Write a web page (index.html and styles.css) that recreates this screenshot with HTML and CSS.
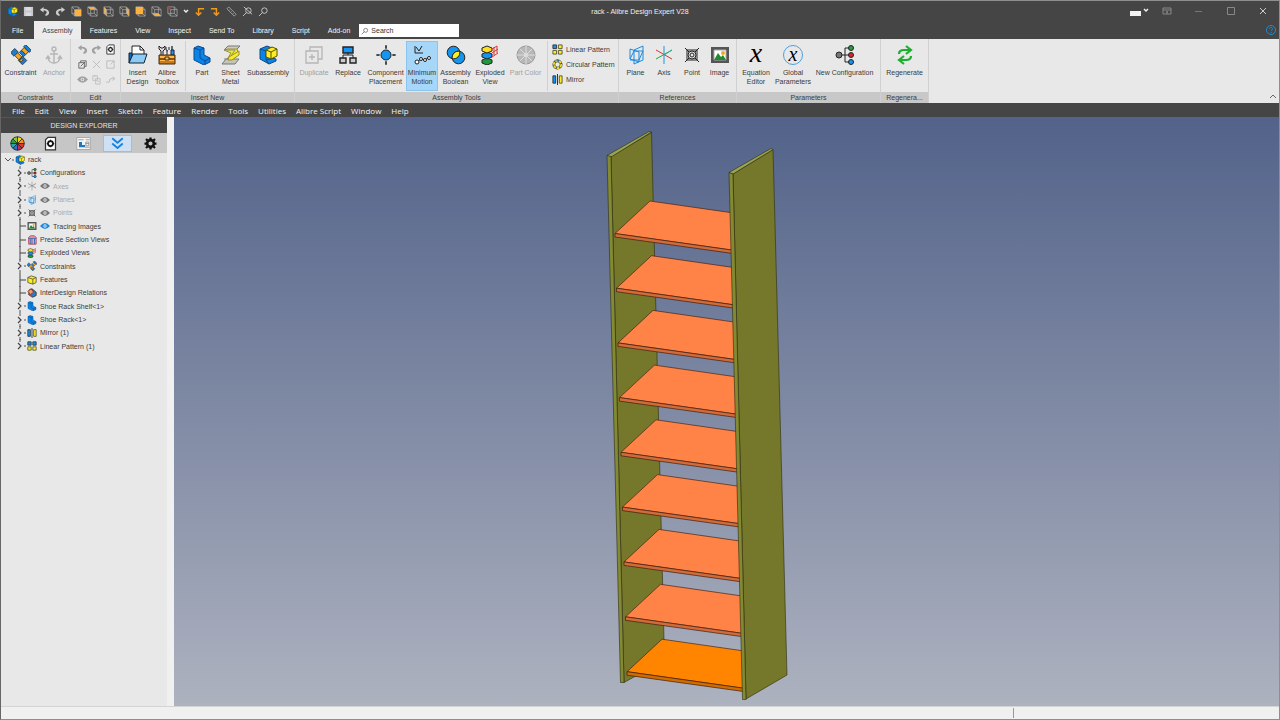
FILE: index.html
```
<!DOCTYPE html>
<html lang="en">
    <head>
        <meta charset="UTF-8" />
        <meta name="viewport" content="width=device-width, initial-scale=1.0" />
        <title>rack - Alibre Design Expert V28</title>
        <link rel="stylesheet" href="styles.css">
    </head>
    <body>
        <!-- Icon sprite -->
        <svg class="sprite" aria-hidden="true">
            <symbol id="i-asm" viewBox="0 0 20 20">
                <path d="M2 4l7-3 5 2v10l4 1v2l-7 3-9-5z" fill="#0b84e8" stroke="#124a80" />
                <path d="M2 4l6 2v9l3 4M8 15l8-2" fill="none" stroke="#124a80" />
                <path d="M8 5l6-3 5 2v7l-6 3-5-2z" fill="#ffee22" stroke="#554d10" />
                <path d="M8 5l5 2 6-3M13 7v7" fill="none" stroke="#554d10" />
            </symbol>
            <symbol id="i-part" viewBox="0 0 20 20">
                <path d="M2 3l4-2 6 2v7l6 3v4l-6 3-10-5z" fill="#0b84e8" stroke="#0a4a90" />
                <path d="M2 3l6 2 4-2M8 5v8l5 3 5-3M13 16v3" fill="none" stroke="#0a4a90" />
            </symbol>
            <symbol id="i-constraint" viewBox="0 0 20 20">
                <g transform="rotate(45 8 12)" stroke="#333" stroke-width="0.8">
                    <path d="M-1 9h5v6h-5z" fill="#1a7fd4" />
                    <path d="M4 10h6v4h-6z" fill="#f5a623" />
                    <path d="M10 9h6v6h-6z" fill="#1a7fd4" />
                    <path d="M11 11h2v3h-2z" fill="#f5a623" />
                </g>
                <g transform="rotate(-45 14 6)" stroke="#333" stroke-width="0.8">
                    <path d="M9 3h3v6h-3z" fill="#1a7fd4" />
                    <path d="M12 3h4v6h-4z" fill="#f5a623" />
                    <path d="M16 2h3v8h-3z" fill="#1a7fd4" />
                </g>
            </symbol>
            <symbol id="i-anchor" viewBox="0 0 20 20">
                <g fill="none" stroke="#b5b5b5" stroke-width="1.4">
                    <circle cx="10" cy="4" r="2" />
                    <path d="M10 6v12M6 9h8M4 12c0 4 3 6 6 6s6-2 6-6M2 14l2-3 2 3M14 14l2-3 2 3" />
                </g>
            </symbol>
            <symbol id="i-undo" viewBox="0 0 12 12">
                <path d="M1 4l4-3v2c4 0 6 2 6 4s-1 3-4 4v-2c3-2 1-4-2-4v2z" fill="currentColor" />
            </symbol>
            <symbol id="i-redo" viewBox="0 0 12 12">
                <path d="M11 4l-4-3v2c-4 0-6 2-6 4s1 3 4 4v-2c-3-2-1-4 2-4v2z" fill="currentColor" />
            </symbol>
            <symbol id="i-docgear" viewBox="0 0 12 12">
                <path d="M4 1h6v10h-8v-8z" fill="#fff" stroke="#333" />
                <circle cx="6" cy="6" r="2" fill="none" stroke="#111" stroke-width="1.4" />
                <path d="M6 3v1M6 8v1M3 6h1M8 6h1" stroke="#111" />
            </symbol>
            <symbol id="i-copy" viewBox="0 0 12 12">
                <path d="M2 4h6v6h-6zM4 4v-2h6v6h-2M4 8l5-5" fill="none" stroke="#666" />
            </symbol>
            <symbol id="i-x" viewBox="0 0 12 12">
                <path d="M2 2l8 8M10 2l-8 8" fill="none" stroke="#bbb" />
            </symbol>
            <symbol id="i-edit" viewBox="0 0 12 12">
                <path d="M7 2h-5v8h8v-5M6 6l4-4M7 2h3v3" fill="none" stroke="#bbb" />
            </symbol>
            <symbol id="i-eye" viewBox="0 0 12 12">
                <path d="M0 6q6-7 12 0q-6 7-12 0" fill="currentColor" />
                <circle cx="6" cy="6" r="2" fill="#e8e8e8" />
                <circle cx="6" cy="6" r="1" fill="currentColor" />
            </symbol>
            <symbol id="i-paste" viewBox="0 0 12 12">
                <path d="M2 2h5v5h-5zM5 5h5v6h-5zM4 1v2M7 8h2" fill="none" stroke="#c0c0c0" />
            </symbol>
            <symbol id="i-route" viewBox="0 0 12 12">
                <path d="M1 9h3l2-4h4M8 3l3 2-3 2M5 9v-3" fill="none" stroke="#c0c0c0" />
            </symbol>
            <symbol id="i-insert" viewBox="0 0 20 20">
                <path d="M4 13v-12h8l4 4v9" fill="#fff" stroke="#222" />
                <path d="M12 1v4h4" fill="none" stroke="#222" />
                <path d="M1 18v-10h3v4" fill="#0b6fc0" stroke="#123" />
                <path d="M5 9h14l-3 9h-15z" fill="#8ccbf5" stroke="#123" />
            </symbol>
            <symbol id="i-toolbox" viewBox="0 0 20 20">
                <path d="M4 10v-4l-2-2v-3l2 2h2l2-2v3l-2 2v4" fill="#ddd" stroke="#222" />
                <path d="M10 10v-4M9 2v3l2 1M12 2v3" fill="none" stroke="#222" />
                <path d="M15 1v4" stroke="#333" stroke-width="1.4" />
                <path d="M14 5h3v5h-3z" fill="#2694e8" stroke="#124" />
                <path d="M2 10h16v9h-16z" fill="#c87a1c" stroke="#4a2a08" />
                <path d="M3 11h14v2h-14zM3 15h14v1h-14z" fill="#ffb94e" />
                <path d="M2 14h16" stroke="#4a2a08" />
                <path d="M8 12h4v3h-4z" fill="#eec070" stroke="#4a2a08" />
            </symbol>
            <symbol id="i-sheet" viewBox="0 0 20 20">
                <path d="M7 1h12l-4 4h-12z" fill="#ccccc4" stroke="#777" />
                <path d="M3 5l4-1h9l1 3-8 9h-4l5-8z" fill="#f4ea28" stroke="#99922a" />
                <path d="M3 5h11l-6 9h-5" fill="none" stroke="#888" />
                <path d="M5 14h13l-4 5h-13z" fill="#c4c4ba" stroke="#777" />
                <path d="M8 12l10-6v4l-7 5h-4z" fill="#f4ea28" stroke="#99922a" />
            </symbol>
            <symbol id="i-dup" viewBox="0 0 20 20">
                <path d="M2 6h12v12h-12zM6 6v-4h12v12h-4M8 9v6M5 12h6" fill="none" stroke="#b5b5b5" stroke-width="1.3" />
            </symbol>
            <symbol id="i-replace" viewBox="0 0 20 20">
                <path d="M5 2h10v6h-10z" fill="#1594f0" stroke="#222" stroke-width="1.4" />
                <path d="M5 13v-3h10v3M10 8v2" fill="none" stroke="#222" />
                <path d="M2 13h6v5h-6zM12 13h6v5h-6z" fill="#ccc" stroke="#222" stroke-width="1.4" />
            </symbol>
            <symbol id="i-place" viewBox="0 0 20 20">
                <circle cx="10" cy="10" r="5" fill="#1594f0" stroke="#222" />
                <path d="M10 0v4M10 16v4M0 10h4M16 10h4M9 2h2M9 18h2M2 9v2M18 9v2" stroke="#222" stroke-width="1.2" />
            </symbol>
            <symbol id="i-motion" viewBox="0 0 20 20">
                <path d="M3 1v7h8M4 2l3 4 3-5" fill="none" stroke="#222" />
                <path d="M5 17l4-3 4 1 4-3" fill="none" stroke="#222" />
                <circle cx="5" cy="17" r="2" fill="#fff" stroke="#222" />
                <circle cx="9" cy="14" r="1.5" fill="#fff" stroke="#222" />
                <circle cx="13" cy="15" r="1.5" fill="#fff" stroke="#222" />
                <circle cx="17" cy="13" r="1.5" fill="#fff" stroke="#222" />
            </symbol>
            <symbol id="i-boolean" viewBox="0 0 20 20">
                <circle cx="7.500" cy="7.500" r="6.300" fill="#1594f0" stroke="#222" />
                <circle cx="12.500" cy="12.500" r="6.300" fill="#1594f0" stroke="#222" />
                <path d="M6.300 13.700a6.300 6.300 0 0 1 7.400-7.400a6.300 6.300 0 0 1-7.400 7.400" fill="#ffee22" stroke="#222" />
            </symbol>
            <symbol id="i-exploded" viewBox="0 0 20 20">
                <path d="M2 15l5-2 5 2v3l-5 2-5-2z" fill="#1f9a3a" stroke="#222" />
                <path d="M2 9l5-2 5 2v3l-5 2-5-2z" fill="#1594f0" stroke="#222" />
                <path d="M2 3l5-2 5 2v3l-5 2-5-2z" fill="#ffdd22" stroke="#222" />
                <path d="M12 4l5-3M12 8l6-4M12 12l6-4M14 2v8M17 1v7" fill="none" stroke="#d33" />
            </symbol>
            <symbol id="i-wheelgray" viewBox="0 0 20 20">
                <circle cx="10" cy="10" r="9" fill="#b8b8b8" stroke="#999" />
                <path d="M10 1v18M1 10h18M4 4l12 12M16 4l-12 12" stroke="#ddd" />
                <circle cx="10" cy="10" r="2" fill="#ddd" />
            </symbol>
            <symbol id="i-linear" viewBox="0 0 12 12">
                <path d="M1 1h4v4h-4z" fill="#1594f0" stroke="#333" />
                <path d="M7 1h4v4h-4zM1 7h4v4h-4zM7 7h4v4h-4z" fill="#ffee22" stroke="#553" />
            </symbol>
            <symbol id="i-linearpart" viewBox="0 0 12 12">
                <path d="M1 1h4v4h-4zM7 1h4v4h-4z" fill="#1594f0" stroke="#333" />
                <path d="M1 7h4v4h-4zM7 7h4v4h-4z" fill="#ffee22" stroke="#553" />
            </symbol>
            <symbol id="i-circular" viewBox="0 0 12 12">
                <circle cx="6" cy="6" r="4" fill="none" stroke="#444" stroke-width="3" />
                <circle cx="6" cy="6" r="4" fill="none" stroke="#f2e022" stroke-width="2" stroke-dasharray="3 1" />
                <path d="M5 0h2v3h-2z" fill="#1594f0" />
            </symbol>
            <symbol id="i-mirror" viewBox="0 0 12 12">
                <path d="M1 2h3v8h-3z" fill="#1594f0" stroke="#234" />
                <path d="M8 2h3v8h-3z" fill="#ffee22" stroke="#553" />
                <path d="M6 0v12" stroke="#222" />
            </symbol>
            <symbol id="i-plane" viewBox="0 0 20 20">
                <path d="M8 5l9-4v14l-9 4zM4 4l9 3v10l-9-3zM4 14l4-8h9l-4 9h-9" fill="none" stroke="#1a8ae0" />
            </symbol>
            <symbol id="i-axis" viewBox="0 0 20 20">
                <path d="M10 1v18" stroke="#2090e0" />
                <path d="M2 5l16 9" stroke="#d33" />
                <path d="M18 5l-16 9" stroke="#2a4" />
                <path d="M10 10l8-5" stroke="#2aa" />
            </symbol>
            <symbol id="i-point" viewBox="0 0 20 20">
                <path d="M5 5h10v10h-10zM3 3l14 14M17 3l-14 14" fill="none" stroke="#222" />
                <circle cx="10" cy="10" r="4" fill="#e8e8e8" stroke="#222" />
                <circle cx="10" cy="10" r="2" fill="none" stroke="#222" />
            </symbol>
            <symbol id="i-image" viewBox="0 0 20 20">
                <path d="M1 2h18v16h-18z" fill="#555" />
                <path d="M4 5h12v10h-12z" fill="#fff" stroke="#aaa" />
                <circle cx="13" cy="8" r="2" fill="#f6a821" />
                <path d="M4 15l4-7 3 4 2-2 3 5z" fill="#218a30" />
            </symbol>
            <symbol id="i-newconf" viewBox="0 0 20 20">
                <path d="M5 10h12M10 3v14M10 3h6M10 17h6" fill="none" stroke="#222" />
                <circle cx="4" cy="10" r="3" fill="#777" stroke="#222" />
                <circle cx="16" cy="3" r="2.500" fill="#1fa03a" stroke="#222" />
                <circle cx="16" cy="10" r="2.500" fill="#d8262c" stroke="#222" />
                <circle cx="16" cy="17" r="2.500" fill="#1594f0" stroke="#222" />
            </symbol>
            <symbol id="i-regen" viewBox="0 0 20 20">
                <g fill="none" stroke="#1cae2c" stroke-width="2.2">
                    <path d="M4 9c0-3 2-4 5-4h6M11 1l5 4-5 4" />
                    <path d="M16 11c0 3-2 4-5 4h-6M9 11l-5 4 5 4" />
                </g>
            </symbol>
            <symbol id="i-wheel" viewBox="0 0 20 20">
                <circle cx="10" cy="10" r="9" fill="#222" />
                <path d="M10 10V1a9 9 0 0 1 6.400 2.600z" fill="#f6d11c" />
                <path d="M10 10l6.400-6.400A9 9 0 0 1 19 10z" fill="#f7931e" />
                <path d="M10 10h9a9 9 0 0 1-2.600 6.400z" fill="#e8342a" />
                <path d="M10 10l6.400 6.400A9 9 0 0 1 10 19z" fill="#c32a50" />
                <path d="M10 10v9a9 9 0 0 1-6.400-2.600z" fill="#2f6fd0" />
                <path d="M10 10l-6.400 6.400A9 9 0 0 1 1 10z" fill="#22a5b8" />
                <path d="M10 10H1a9 9 0 0 1 2.600-6.400z" fill="#26a03c" />
                <path d="M10 10L3.600 3.600A9 9 0 0 1 10 1z" fill="#8fca2c" />
                <path d="M10 1v18M1 10h18M4 4l12 12M16 4l-12 12" stroke="#222" />
                <circle cx="10" cy="10" r="9" fill="none" stroke="#222" />
            </symbol>
            <symbol id="i-panelview" viewBox="0 0 20 20">
                <path d="M1 2h18v16h-18z" fill="#f4f4f4" stroke="#999" />
                <path d="M3 5h7M13 5h5M12 15h6" stroke="#888" />
                <path d="M4 8h4v4h4v3h-8z" fill="#2277bb" />
                <path d="M13 8h4v5h-4zM13 10h4" fill="none" stroke="#888" />
            </symbol>
            <symbol id="i-chevrons" viewBox="0 0 20 20">
                <path d="M3 3l7 6 7-6M3 10l7 6 7-6" fill="none" stroke="#1383e0" stroke-width="2.4" />
            </symbol>
            <symbol id="i-gear" viewBox="0 0 20 20">
                <circle cx="10" cy="10" r="4.500" fill="none" stroke="#111" stroke-width="3.500" />
                <path d="M10 2v3M10 15v3M2 10h3M15 10h3M4 4l2 2M14 14l2 2M16 4l-2 2M6 14l-2 2" stroke="#111" stroke-width="3" />
            </symbol>
            <symbol id="i-section" viewBox="0 0 12 12">
                <path d="M2 3l2-2h5l2 2v8h-9z" fill="#e6a5b0" stroke="#b03a48" />
                <path d="M4 4v7M6 4v7M9 4v7M2 4h9" stroke="#2a66b8" />
            </symbol>
            <symbol id="i-cube" viewBox="0 0 12 12">
                <path d="M1 3l4-2 6 2v6l-4 2-6-2z" fill="#ffee22" stroke="#554" />
                <path d="M1 3l6 2 4-2M7 5v6" fill="none" stroke="#554" />
            </symbol>
            <symbol id="i-relations" viewBox="0 0 12 12">
                <path d="M3 2l3-1 5 4v4l-4 2-5-3z" fill="#2a7cc8" stroke="#333" />
                <path d="M1 4l4-3 3 4-4 3z" fill="#f39a5c" stroke="#733" />
                <path d="M2 7l2 1 3 3-2 0z" fill="#c04438" />
            </symbol>
            <!-- View cubes of the quick access bar -->
            <symbol id="i-boxwire" viewBox="0 0 12 12">
                <path d="M1 1h7v7h-7zM4 4h7v7h-7zM1 1l3 3M8 1l3 3M1 8l3 3M8 8l3 3" fill="none" stroke="#aaa" stroke-width="0.8" />
            </symbol>
            <symbol id="i-save" viewBox="0 0 12 12">
                <path d="M1 1h10v10h-10z" fill="#c4c7cc" />
                <path d="M3 1h6v4h-6zM3 7h6v4h-6z" fill="#d9dbdf" />
            </symbol>
            <symbol id="i-uparrow" viewBox="0 0 12 12">
                <path d="M11 3h-6v7M2 7l3 3 3-3" fill="none" stroke="#f29a1c" stroke-width="1.6" />
            </symbol>
            <symbol id="i-downarrow" viewBox="0 0 12 12">
                <path d="M1 3h6v7M4 7l3 3 3-3" fill="none" stroke="#f29a1c" stroke-width="1.6" />
            </symbol>
            <symbol id="i-ruler" viewBox="0 0 12 12">
                <path d="M1 3l2-2 8 8-2 2zM4 4l-1 1M6 6l-1 1M8 8l-1 1" fill="none" stroke="#bbb" stroke-width="0.8" />
            </symbol>
            <symbol id="i-zoomfit" viewBox="0 0 12 12">
                <circle cx="7" cy="5" r="3" fill="none" stroke="#ccc" />
                <path d="M5 7l-4 4M2 1l9 8" stroke="#ccc" />
            </symbol>
            <symbol id="i-zoom" viewBox="0 0 12 12">
                <circle cx="7" cy="5" r="3" fill="none" stroke="currentColor" />
                <path d="M5 7l-4 4" stroke="currentColor" />
            </symbol>
            <!-- Tree branches -->
            <symbol id="t-closed" viewBox="0 0 10 14">
                <path d="M4 0v3M4 11v3M8 7h2" stroke="#555" />
                <path d="M2 4l3 3-3 3" fill="none" stroke="#444" stroke-width="1.2" />
            </symbol>
            <symbol id="t-leaf" viewBox="0 0 10 14">
                <path d="M4 0v14M4 7h6" fill="none" stroke="#444" />
            </symbol>
            <symbol id="t-last" viewBox="0 0 10 14">
                <path d="M4 0v3M8 7h2" stroke="#555" />
                <path d="M2 4l3 3-3 3" fill="none" stroke="#444" stroke-width="1.2" />
            </symbol>
            <symbol id="t-open" viewBox="0 0 10 14">
                <path d="M1 5l3 3 3-3M8 7h2" fill="none" stroke="#555" />
            </symbol>
        </svg>

        <header class="titlebar">
            <div class="quick">
                <button aria-label="Assembly"><svg><use href="#i-asm" /></svg></button>
                <button aria-label="Save"><svg><use href="#i-save" /></svg></button>
                <button aria-label="Undo"><svg><use href="#i-undo" /></svg></button>
                <button aria-label="Redo"><svg><use href="#i-redo" /></svg></button>
                <button aria-label="Front view"><svg viewBox="0 0 12 12"><use href="#i-boxwire" /><path d="M4 4h7v7h-7z" fill="#fdb140" /></svg></button>
                <button aria-label="Top view"><svg viewBox="0 0 12 12"><path d="M1 1h7l3 3h-7z" fill="#fdb140" /><use href="#i-boxwire" /></svg></button>
                <button aria-label="Left view"><svg viewBox="0 0 12 12"><path d="M1 1l3 3v7l-3-3z" fill="#fdb140" /><use href="#i-boxwire" /></svg></button>
                <button aria-label="Right view"><svg viewBox="0 0 12 12"><path d="M8 1l3 3v7l-3-3z" fill="#fdb140" /><use href="#i-boxwire" /></svg></button>
                <button aria-label="Back view"><svg viewBox="0 0 12 12"><use href="#i-boxwire" /><path d="M1 1h8v8h-8z" fill="#fdb140" /></svg></button>
                <button aria-label="Bottom view"><svg viewBox="0 0 12 12"><path d="M1 8h7l3 3h-7z" fill="#fdb140" /><use href="#i-boxwire" /></svg></button>
                <button aria-label="Isometric view"><svg viewBox="0 0 12 12"><use href="#i-boxwire" /><path d="M1 1h3v3h-3z" fill="#a04848" /></svg></button>
                <button class="more" aria-label="More views"><svg viewBox="0 0 8 8"><path d="M2 3l2 2 2-2" fill="none" stroke="#eee" stroke-width="1.500" /></svg></button>
                <button aria-label="Previous view"><svg><use href="#i-uparrow" /></svg></button>
                <button aria-label="Next view"><svg><use href="#i-downarrow" /></svg></button>
                <button aria-label="Measure"><svg><use href="#i-ruler" /></svg></button>
                <button aria-label="Zoom to fit"><svg><use href="#i-zoomfit" /></svg></button>
                <button aria-label="Zoom"><svg><use href="#i-zoom" /></svg></button>
            </div>
            <div class="title">rack - Alibre Design Expert V28</div>
            <div class="window">
                <button class="swatch" aria-label="Color scheme"><svg viewBox="0 0 20 12"><path d="M0 6h11v5h-11z" fill="#f2f2f2" /><path d="M14 4l2 2 2-2" fill="none" stroke="#eee" stroke-width="1.500" /></svg></button>
                <button aria-label="Ribbon options"><svg viewBox="0 0 12 12"><path d="M2 3h8v6h-8zM2 5h8M6 9v-3M5 7h2" fill="none" stroke="#888" /></svg></button>
                <button aria-label="Minimize"><svg viewBox="0 0 12 12"><path d="M2 6.500h7" stroke="#777" /></svg></button>
                <button aria-label="Maximize"><svg viewBox="0 0 12 12"><path d="M2.500 2.500h7v7h-7z" fill="none" stroke="#888" /></svg></button>
                <button aria-label="Close"><svg viewBox="0 0 12 12"><path d="M3 3l6 6M9 3l-6 6" stroke="#ccc" /></svg></button>
            </div>
        </header>

        <nav class="tabs">
            <button>File</button>
            <button class="active">Assembly</button>
            <button>Features</button>
            <button>View</button>
            <button>Inspect</button>
            <button>Send To</button>
            <button>Library</button>
            <button>Script</button>
            <button>Add-on</button>
            <label class="search">
                <svg><use href="#i-zoom" /></svg>
                <input type="text" placeholder="Search" aria-label="Search" />
            </label>
            <button class="help" aria-label="Help"><svg viewBox="0 0 12 12"><circle cx="6" cy="6" r="4.500" fill="none" stroke="#2489cc" /><path d="M4.500 5c0-2 3-2 3 0 0 1-1.500 1-1.500 2M6 8v1" fill="none" stroke="#2489cc" /></svg></button>
        </nav>

        <section class="ribbon">
            <div class="group constraints">
                <div class="tools">
                    <button><svg><use href="#i-constraint" /></svg>Constraint</button>
                    <button disabled><svg><use href="#i-anchor" /></svg>Anchor</button>
                </div>
                <h2>Constraints</h2>
            </div>
            <div class="group edit">
                <div class="minis">
                    <button disabled aria-label="Undo"><svg><use href="#i-undo" /></svg></button>
                    <button disabled aria-label="Redo"><svg><use href="#i-redo" /></svg></button>
                    <button aria-label="Properties"><svg><use href="#i-docgear" /></svg></button>
                    <button aria-label="Copy"><svg><use href="#i-copy" /></svg></button>
                    <button disabled aria-label="Delete"><svg><use href="#i-x" /></svg></button>
                    <button disabled aria-label="Edit"><svg><use href="#i-edit" /></svg></button>
                    <button disabled aria-label="Show"><svg><use href="#i-eye" /></svg></button>
                    <button disabled aria-label="Paste"><svg><use href="#i-paste" /></svg></button>
                    <button disabled aria-label="Reroute"><svg><use href="#i-route" /></svg></button>
                </div>
                <h2>Edit</h2>
            </div>
            <div class="group insert">
                <div class="tools">
                    <button><svg><use href="#i-insert" /></svg>Insert<br>Design</button>
                    <button><svg><use href="#i-toolbox" /></svg>Alibre<br>Toolbox</button>
                    <span class="rule"></span>
                    <button><svg><use href="#i-part" /></svg>Part</button>
                    <button><svg><use href="#i-sheet" /></svg>Sheet<br>Metal</button>
                    <button><svg><use href="#i-asm" /></svg>Subassembly</button>
                </div>
                <h2>Insert New</h2>
            </div>
            <div class="group assembly">
                <div class="tools">
                    <button disabled><svg><use href="#i-dup" /></svg>Duplicate</button>
                    <button><svg><use href="#i-replace" /></svg>Replace</button>
                    <button><svg><use href="#i-place" /></svg>Component<br>Placement</button>
                    <button class="on"><svg><use href="#i-motion" /></svg>Minimum<br>Motion</button>
                    <button><svg><use href="#i-boolean" /></svg>Assembly<br>Boolean</button>
                    <button><svg><use href="#i-exploded" /></svg>Exploded<br>View</button>
                    <button disabled><svg><use href="#i-wheelgray" /></svg>Part Color</button>
                    <span class="rule"></span>
                    <div class="list">
                        <button><svg><use href="#i-linear" /></svg>Linear Pattern</button>
                        <button><svg><use href="#i-circular" /></svg>Circular Pattern</button>
                        <button><svg><use href="#i-mirror" /></svg>Mirror</button>
                    </div>
                </div>
                <h2>Assembly Tools</h2>
            </div>
            <div class="group references">
                <div class="tools">
                    <button><svg><use href="#i-plane" /></svg>Plane</button>
                    <button><svg><use href="#i-axis" /></svg>Axis</button>
                    <button><svg><use href="#i-point" /></svg>Point</button>
                    <button><svg><use href="#i-image" /></svg>Image</button>
                </div>
                <h2>References</h2>
            </div>
            <div class="group parameters">
                <div class="tools">
                    <button><span class="var">x</span>Equation<br>Editor</button>
                    <button><span class="var ring">x</span>Global<br>Parameters</button>
                    <button><svg><use href="#i-newconf" /></svg>New Configuration</button>
                </div>
                <h2>Parameters</h2>
            </div>
            <div class="group regenerate">
                <div class="tools">
                    <button><svg><use href="#i-regen" /></svg>Regenerate</button>
                </div>
                <h2>Regenera...</h2>
            </div>
            <button class="collapse" aria-label="Collapse ribbon"><svg viewBox="0 0 8 8"><path d="M1 6l3-3 3 3" fill="none" stroke="#666" /></svg></button>
        </section>

        <nav class="menubar">
            <a href="#">File</a>
            <a href="#">Edit</a>
            <a href="#">View</a>
            <a href="#">Insert</a>
            <a href="#">Sketch</a>
            <a href="#">Feature</a>
            <a href="#">Render</a>
            <a href="#">Tools</a>
            <a href="#">Utilities</a>
            <a href="#">Alibre Script</a>
            <a href="#">Window</a>
            <a href="#">Help</a>
        </nav>

        <main>
            <aside class="explorer">
                <h1>DESIGN EXPLORER</h1>
                <div class="modes">
                    <button aria-label="Colors"><svg><use href="#i-wheel" /></svg></button>
                    <button aria-label="Properties"><svg><use href="#i-docgear" /></svg></button>
                    <button aria-label="Layout"><svg><use href="#i-panelview" /></svg></button>
                    <button class="on" aria-label="Expand"><svg><use href="#i-chevrons" /></svg></button>
                    <button aria-label="Settings"><svg><use href="#i-gear" /></svg></button>
                </div>
                <ul class="tree">
                    <li class="root"><svg class="branch"><use href="#t-open" /></svg><svg><use href="#i-asm" /></svg>rack</li>
                    <li><svg class="branch"><use href="#t-closed" /></svg><svg><use href="#i-newconf" /></svg>Configurations</li>
                    <li class="off"><svg class="branch"><use href="#t-closed" /></svg><svg class="faded"><use href="#i-axis" /></svg><svg class="eye"><use href="#i-eye" /></svg>Axes</li>
                    <li class="off"><svg class="branch"><use href="#t-closed" /></svg><svg><use href="#i-plane" /></svg><svg class="eye"><use href="#i-eye" /></svg>Planes</li>
                    <li class="off"><svg class="branch"><use href="#t-closed" /></svg><svg><use href="#i-point" /></svg><svg class="eye"><use href="#i-eye" /></svg>Points</li>
                    <li><svg class="branch"><use href="#t-leaf" /></svg><svg><use href="#i-image" /></svg><svg class="eye shown"><use href="#i-eye" /></svg>Tracing Images</li>
                    <li><svg class="branch"><use href="#t-leaf" /></svg><svg><use href="#i-section" /></svg>Precise Section Views</li>
                    <li><svg class="branch"><use href="#t-leaf" /></svg><svg><use href="#i-exploded" /></svg>Exploded Views</li>
                    <li><svg class="branch"><use href="#t-closed" /></svg><svg><use href="#i-constraint" /></svg>Constraints</li>
                    <li><svg class="branch"><use href="#t-leaf" /></svg><svg><use href="#i-cube" /></svg>Features</li>
                    <li><svg class="branch"><use href="#t-leaf" /></svg><svg><use href="#i-relations" /></svg>InterDesign Relations</li>
                    <li><svg class="branch"><use href="#t-closed" /></svg><svg><use href="#i-part" /></svg>Shoe Rack Shelf&lt;1&gt;</li>
                    <li><svg class="branch"><use href="#t-closed" /></svg><svg><use href="#i-part" /></svg>Shoe Rack&lt;1&gt;</li>
                    <li><svg class="branch"><use href="#t-closed" /></svg><svg><use href="#i-mirror" /></svg>Mirror (1)</li>
                    <li><svg class="branch"><use href="#t-last" /></svg><svg><use href="#i-linearpart" /></svg>Linear Pattern (1)</li>
                </ul>
            </aside>
            <div class="viewport">
                <svg class="model" viewBox="174 117 1105 589" role="img" aria-label="Shoe rack">
                    <defs>
                        <g id="shelf" stroke="#4a2412" stroke-width="0.700" stroke-linejoin="round">
                            <path d="M615 233.500L650 201l85 12.200v37.300z" />
                            <path class="lip" d="M615 233.500l120 17v3.300l-120-16.800z" />
                        </g>
                    </defs>
                    <g stroke="#2c2c10" stroke-width="0.600" stroke-linejoin="round">
                        <path d="M611 156.500L651.500 132.500L664.500 660L624 682.500z" fill="#75772b" />
                        <path d="M607 155.500L649 131.500l2.500 .500L611 157z" fill="#9aa552" />
                        <path d="M607 155.500l4 1L624 682.500h-3.500z" fill="#838a32" />
                    </g>
                    <g class="shelves">
                        <use href="#shelf" />
                        <use href="#shelf" x="1.500" y="54.700" />
                        <use href="#shelf" x="3" y="109.400" />
                        <use href="#shelf" x="4.500" y="164.100" />
                        <use href="#shelf" x="6" y="218.800" />
                        <use href="#shelf" x="7.500" y="273.600" />
                        <use href="#shelf" x="9" y="328.400" />
                        <use href="#shelf" x="10.500" y="383.300" />
                        <use class="picked" href="#shelf" x="12" y="438.200" />
                    </g>
                    <g stroke="#2c2c10" stroke-width="0.600" stroke-linejoin="round">
                        <path d="M733 174L773 149.500L787 675L746 699z" fill="#75772b" />
                        <path d="M729 172.500L771 148.500l2 1L733 174z" fill="#9aa552" />
                        <path d="M729 172.500l4 1.500L746 699.500h-3.500z" fill="#838a32" />
                    </g>
                </svg>
            </div>
        </main>

        <footer class="statusbar">
            <span></span>
            <span></span>
        </footer>
    </body>
</html>
```
FILE: styles.css
```
* {
    margin: 0;
    padding: 0;
    box-sizing: border-box;
}
html,
body {
    height: 100%;
}
body {
    display: flex;
    flex-direction: column;
    background-color: #454545;
    border: 1px solid #8e8e8e;
    border-left-color: #666;
    color: #3a3a3a;
    font: 7px/9px "Liberation Sans", sans-serif;
}
button {
    border: 0;
    background: none;
    color: inherit;
    font: inherit;
}
svg {
    display: block;
    flex: none;
}
h1,
h2 {
    font: inherit;
}
.sprite {
    position: absolute;
    width: 0;
    height: 0;
}

/* Title bar */
.titlebar {
    display: grid;
    grid-template-columns: 1fr auto 1fr;
    align-items: center;
    height: 20px;
    color: #f0f0f0;
}
.quick {
    display: flex;
    align-items: center;
    padding-left: 4px;
    color: #ccc;
    & button {
        width: 16px;
        padding: 0 2px;
    }
    & svg {
        width: 11px;
        height: 11px;
    }
    & .more {
        width: 11px;
        padding: 0 1px;
        & svg {
            width: 8px;
            height: 8px;
        }
    }
}
.window {
    display: flex;
    justify-content: flex-end;
    & button {
        display: grid;
        place-items: center;
        width: 32px;
    }
    & svg {
        width: 12px;
        height: 12px;
    }
    & .swatch {
        width: 22px;
        & svg {
            width: 20px;
        }
    }
}

/* Tabs */
.tabs {
    display: flex;
    align-items: stretch;
    height: 18px;
    color: #f4f4f4;
    padding: 0 2px;
    & > button {
        padding: 0 9px;
    }
    & .active {
        margin-left: 2px;
        padding: 0 8px;
        background-color: #ececec;
        color: #444;
    }
    & .help {
        margin-left: auto;
        padding: 0;
        & svg {
            width: 12px;
            height: 12px;
        }
    }
}
.search {
    display: flex;
    align-items: center;
    width: 100px;
    margin: 3px 0 2px;
    padding: 0 2px;
    gap: 2px;
    background-color: #fff;
    color: #555;
    & svg {
        width: 8px;
        height: 8px;
    }
    & input {
        width: 100%;
        border: 0;
        outline: 0;
        font: inherit;
    }
    & input::placeholder {
        color: #333;
    }
}

/* Ribbon */
.ribbon {
    display: flex;
    height: 64px;
    background-color: #e8e8e8;
    & h2 {
        height: 11px;
        margin-top: auto;
        background-color: #c8c8c8;
        line-height: 11px;
        text-align: center;
    }
    & button:disabled {
        color: #a0a0a0;
    }
}
.group {
    display: flex;
    flex-direction: column;
    flex: none;
    border-right: 1px solid #d0d0d0;
}
.tools {
    display: grid;
    height: 50px;
    margin-top: 2px;
    & > button {
        display: flex;
        flex-direction: column;
        align-items: center;
        padding-top: 4px;
        white-space: nowrap;
        line-height: 9px;
    }
    & > button > svg {
        width: 20px;
        height: 20px;
        margin-bottom: 3px;
    }
    & > .on {
        background-color: #a6d6f8;
        outline: 1px solid #8cc4ee;
        outline-offset: -1px;
    }
    & .rule {
        width: 1px;
        margin: 0 auto;
        background-color: #d0d0d0;
    }
}
.constraints {
    width: 70px;
    & .tools {
        grid-template-columns: 39px 28px;
    }
}
.edit {
    width: 50px;
}
.insert {
    width: 174px;
    & .tools {
        padding-left: 2px;
        grid-template-columns: 29px 30px 6px 28px 29px 46px;
    }
}
.assembly {
    width: 324px;
    & .tools {
        padding-left: 2px;
        grid-template-columns: 34px 34px 41px 32px 35px 34px 37px 6px 1fr;
    }
}
.references {
    width: 118px;
    & .tools {
        padding-left: 2px;
        grid-template-columns: 29px 28px 28px 27px;
    }
}
.parameters {
    width: 144px;
    & .tools {
        grid-template-columns: 38px 36px 67px;
    }
}
.regenerate {
    width: 48px;
}
.minis {
    display: grid;
    grid-template-columns: repeat(3, 14px);
    grid-template-rows: repeat(3, 15px);
    padding: 3px 4px;
    place-items: center;
    color: #b4b4b4;
    & svg {
        width: 11px;
        height: 11px;
    }
}
.list {
    display: grid;
    grid-template-rows: repeat(3, 15px);
    align-content: start;
    padding: 1px 0 0 2px;
    & button {
        display: flex;
        align-items: center;
        gap: 3px;
        white-space: nowrap;
    }
    & svg {
        width: 11px;
        height: 11px;
    }
}
.var {
    width: 20px;
    height: 20px;
    margin-bottom: 3px;
    border-radius: 50%;
    color: #000;
    font: italic 28px/16px "Liberation Serif", serif;
    text-align: center;
}
.ring {
    border: 1px solid #4aa0e6;
    font-size: 20px;
}
.collapse {
    margin: auto 2px 3px auto;
    & svg {
        width: 8px;
        height: 8px;
    }
}

/* Menu bar */
.menubar {
    display: flex;
    align-items: center;
    gap: 10px;
    height: 14px;
    padding-left: 11px;
    font-family: "Open Sans", sans-serif;
    font-size: 8px;
    & a {
        color: #f4f4f4;
        text-decoration: none;
    }
}

/* Work area */
main {
    flex: 1;
    display: flex;
    min-height: 0;
}
.explorer {
    flex: none;
    width: 166px;
    background-color: #e8e8e8;
    & h1 {
        height: 16px;
        background-color: #454545;
        border-top: 1px solid #555;
        color: #e4e4e4;
        line-height: 16px;
        text-align: center;
    }
}
.modes {
    display: grid;
    grid-template-columns: repeat(5, 1fr);
    height: 20px;
    padding: 1px 0;
    background-color: #c6c6c6;
    & button {
        display: grid;
        place-items: center;
    }
    & svg {
        width: 15px;
        height: 15px;
    }
    & .on {
        margin: 1px 2px;
        background-color: #cfe0f4;
        border: 1px solid #98bfe8;
    }
}
.tree {
    display: grid;
    grid-template-rows: repeat(15, minmax(0, 1fr));
    height: 200px;
    list-style: none;
    & li {
        display: flex;
        align-items: center;
        padding-left: 15px;
        white-space: nowrap;
    }
    & .root {
        padding-left: 3px;
    }
    & svg {
        width: 10px;
        height: 10px;
        margin-right: 3px;
    }
    & .branch {
        height: 14px;
        margin-right: 1px;
    }
    & .off {
        color: #aaa;
    }
    & .faded {
        filter: grayscale(1);
    }
    & .eye {
        color: #777;
    }
    & .shown {
        color: #1a8ae0;
    }
}
.viewport {
    flex: 1;
    min-width: 0;
    border-left: 7px solid #f0f0f0;
    background-image: linear-gradient(#526289, #adb2bf);
}
.model {
    width: 100%;
    height: 100%;
}
.shelves {
    fill: #ff8247;
    & .picked {
        fill: #ff8400;
    }
}
.lip {
    filter: brightness(0.82);
}

/* Status bar */
.statusbar {
    display: grid;
    grid-template-columns: 1fr 266px;
    height: 13px;
    border-top: 1px solid #d4d4d4;
    background-color: #f0f0f0;
    & span + span {
        margin: 1px 0;
        border-left: 1px solid #999;
    }
}
```
